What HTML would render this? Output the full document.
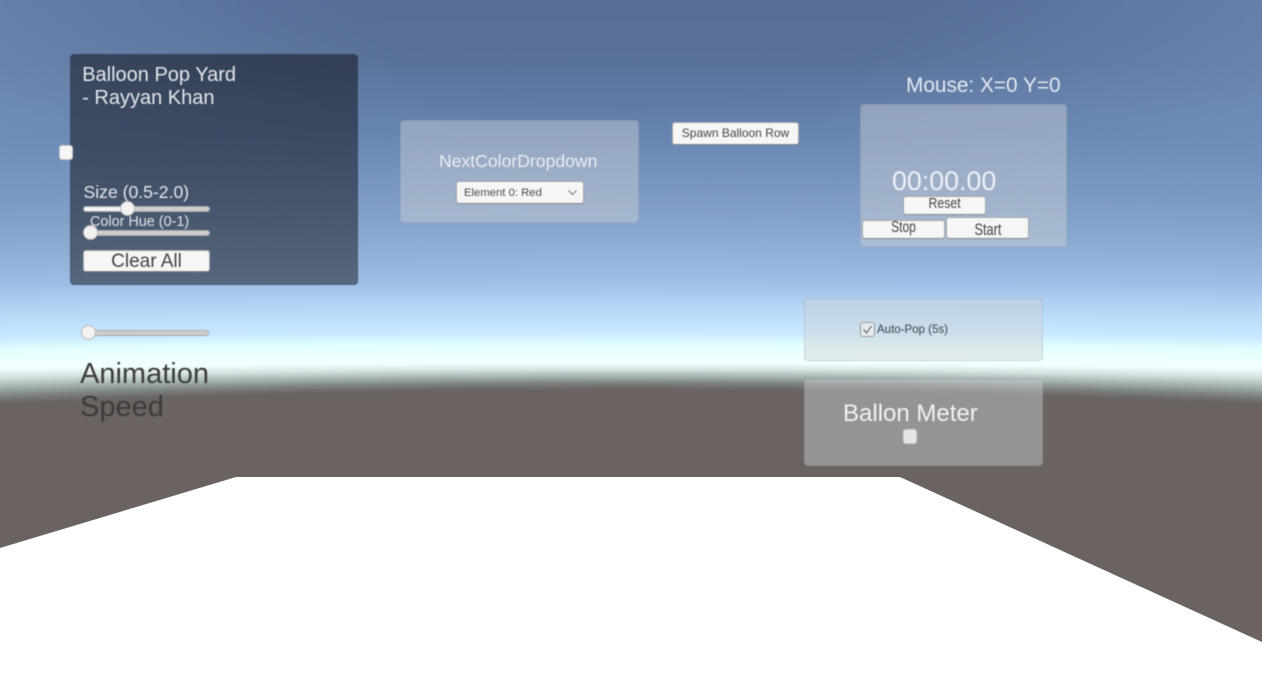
<!DOCTYPE html>
<html>
<head>
<meta charset="utf-8">
<style>
html,body{margin:0;padding:0;width:1262px;height:694px;overflow:hidden;background:#6a6461}
body{position:relative;font-family:"Liberation Sans",sans-serif}
#sky,#tint,#floor,#ui{position:absolute;left:0;top:0;width:1262px;height:694px}
#sky{background:radial-gradient(circle at 631px 40362px,
 #f3ffff 40000px,#e3ffff 40017px,#c9e8ff 40030px,#bfe0fc 40042px,#a0c0e6 40082px,#7f9bc5 40162px,
 #6480ad 40232px,#5a7299 40302px,#566d95 40362px)}
#tint{height:320px;background:radial-gradient(ellipse 760px 300px at 631px 0,rgba(125,155,200,0) 35%,rgba(125,155,200,.55) 100%);
 -webkit-mask-image:linear-gradient(#000 0,#000 120px,transparent 300px);mask-image:linear-gradient(#000 0,#000 120px,transparent 300px)}
#ui{filter:blur(.5px)}
.a{position:absolute;white-space:nowrap}
.panel{position:absolute;box-sizing:border-box;border-radius:4px}
.light{background:rgba(208,209,212,.44);border:1px solid rgba(90,110,140,.18)}
.btn{position:absolute;box-sizing:border-box;background:#f6f6f6;border:1px solid #a4a8ac;border-bottom-color:#85898e;border-radius:3px;color:#444;text-align:center;white-space:nowrap}
.track{position:absolute;height:6px;background:#cdcdcd;border:1px solid #a8a8a8;box-sizing:border-box;border-radius:3px}
.knob{position:absolute;width:15px;height:15px;box-sizing:border-box;border-radius:50%;background:#f2f2f2;border:1px solid #bbb}
.sq{position:absolute;width:14px;height:15px;box-sizing:border-box;border-radius:3px;background:#f6f6f6;border:1px solid #c4c4c4}
.t{display:inline-block;transform-origin:center}
</style>
</head>
<body>
<div id="sky"></div>
<div id="tint"></div>
<svg id="floor" viewBox="0 0 1262 694">
 <defs><filter id="b" filterUnits="userSpaceOnUse" x="-60" y="340" width="1382" height="380"><feGaussianBlur stdDeviation="1"/></filter></defs>
 <g filter="url(#b)">
  <path d="M-50 367L0 367Q631 357 1262 367L1312 367V720H-50Z" fill="#f3ffff"/>
  <path d="M-50 370L0 370Q631 358.4 1262 370L1312 370V720H-50Z" fill="#e9f5f5"/>
  <path d="M-50 373L0 373Q631 359.6 1262 373L1312 373V720H-50Z" fill="#dfebea"/>
  <path d="M-50 376L0 376Q631 361 1262 376L1312 376V720H-50Z" fill="#d4e2e1"/>
  <path d="M-50 379L0 379Q631 362.4 1262 379L1312 379V720H-50Z" fill="#c4d2d0"/>
  <path d="M-50 382L0 382Q631 363.6 1262 382L1312 382V720H-50Z" fill="#b5c3c1"/>
  <path d="M-50 385L0 385Q631 365 1262 385L1312 385V720H-50Z" fill="#a5b5b3"/>
  <path d="M-50 388L0 388Q631 366.4 1262 388L1312 388V720H-50Z" fill="#99a6a4"/>
  <path d="M-50 391L0 391Q631 367.6 1262 391L1312 391V720H-50Z" fill="#8c9593"/>
  <path d="M-50 394L0 394Q631 369 1262 394L1312 394V720H-50Z" fill="#7e8482"/>
  <path d="M-50 397L0 397Q631 370.4 1262 397L1312 397V720H-50Z" fill="#777878"/>
  <path d="M-50 400L0 400Q631 371.6 1262 400L1312 400V720H-50Z" fill="#706d6c"/>
  <path d="M-50 403L0 403Q631 374 1262 403L1312 403V720H-50Z" fill="#6a6461"/>
 </g>
 <polygon points="236,477 900,477 1262,642 1262,694 0,694 0,548" fill="#fff"/>
</svg>

<div id="ui">
<!-- Left panel -->
<div class="panel" style="left:70px;top:54px;width:287.5px;height:231px;background:rgba(0,0,0,.45);border:1px solid rgba(60,75,100,.3)"></div>
<div class="a" style="left:82.2px;top:63.5px;font-size:20px;line-height:23px;color:#e4e6ea">Balloon Pop Yard<br>- Rayyan Khan</div>
<div class="sq" style="left:59px;top:145px"></div>
<div class="a" style="left:83.5px;top:182px;font-size:17.6px;line-height:20px;color:#e4e6ea">Size (0.5-2.0)</div>
<div class="track" style="left:83px;top:206px;width:127px;background:linear-gradient(90deg,#f4f4f4 0,#f4f4f4 40%,#cdcdcd 40%)"></div>
<div class="knob" style="left:120px;top:201px"></div>
<div class="a" style="left:90px;top:213px;font-size:14.4px;line-height:18px;color:#dfe2e6">Color Hue (0-1)</div>
<div class="track" style="left:83px;top:230px;width:127px"></div>
<div class="knob" style="left:83px;top:225px"></div>
<div class="btn" style="left:83px;top:250px;width:127px;height:22px;font-size:19px;line-height:21.5px">Clear All</div>

<!-- Animation speed -->
<div class="track" style="left:82px;top:330px;width:127px"></div>
<div class="knob" style="left:81px;top:325px"></div>
<div class="a" style="left:80px;top:358px;font-size:29px;line-height:33px;color:#3c3c3c">Animation<br>Speed</div>

<!-- Dropdown panel -->
<div class="panel light" style="left:400px;top:120px;width:239px;height:103px"></div>
<div class="a" style="left:439px;top:151px;font-size:17.6px;line-height:21px;color:#e9edf3">NextColorDropdown</div>
<div class="btn" style="left:456px;top:181px;width:128px;height:23px;text-align:left;padding-left:7px;font-size:11.3px;line-height:23.5px;color:#4a4a4a">Element 0: Red</div>
<svg class="a" style="left:567px;top:189px" width="11" height="8" viewBox="0 0 11 8"><path d="M1.5 1.5L5.5 5.5L9.5 1.5" fill="none" stroke="#777" stroke-width="1"/></svg>

<!-- Spawn -->
<div class="btn" style="left:672px;top:122px;width:127px;height:23px;font-size:12px;line-height:21.5px">Spawn Balloon Row</div>

<!-- Timer -->
<div class="a" style="left:906px;top:74px;font-size:20.8px;line-height:24px;color:#e4e9f0">Mouse: X=0 Y=0</div>
<div class="panel light" style="left:860px;top:104px;width:207px;height:143px"></div>
<div class="a" style="left:892px;top:166px;font-size:26.8px;line-height:30px;color:#eef1f6">00:00.00</div>
<div class="btn" style="left:903px;top:196px;width:83px;height:19px;font-size:15px;line-height:13px"><span class="t" style="transform:scaleX(.82)">Reset</span></div>
<div class="btn" style="left:862px;top:220px;width:83px;height:19px;font-size:16px;line-height:14px"><span class="t" style="transform:scaleX(.75)">Stop</span></div>
<div class="btn" style="left:946px;top:217px;width:83px;height:22px;font-size:17px;line-height:23px"><span class="t" style="transform:scaleX(.75)">Start</span></div>

<!-- Auto pop -->
<div class="panel light" style="left:804px;top:298px;width:239px;height:63px"></div>
<div class="sq" style="left:860px;top:322px;width:15px;height:15px;background:#e4eaee;border-color:#9a9a9a"></div>
<svg class="a" style="left:860px;top:322px" width="15" height="15" viewBox="0 0 15 15"><path d="M3.5 7.5L6.5 11L11.5 4" fill="none" stroke="#555" stroke-width="1"/></svg>
<div class="a" style="left:877px;top:322.5px;font-size:11.5px;line-height:15px;color:#3e4448">Auto-Pop (5s)</div>

<!-- Meter -->
<div class="panel light" style="left:804px;top:379px;width:239px;height:87px"></div>
<div class="a" style="left:843px;top:400px;font-size:24px;line-height:28px;color:#f2f2f2">Ballon Meter</div>
<div class="sq" style="left:903px;top:429px;background:#e6e6e6;border-color:#d0d0d0"></div>
</div>
</body>
</html>
